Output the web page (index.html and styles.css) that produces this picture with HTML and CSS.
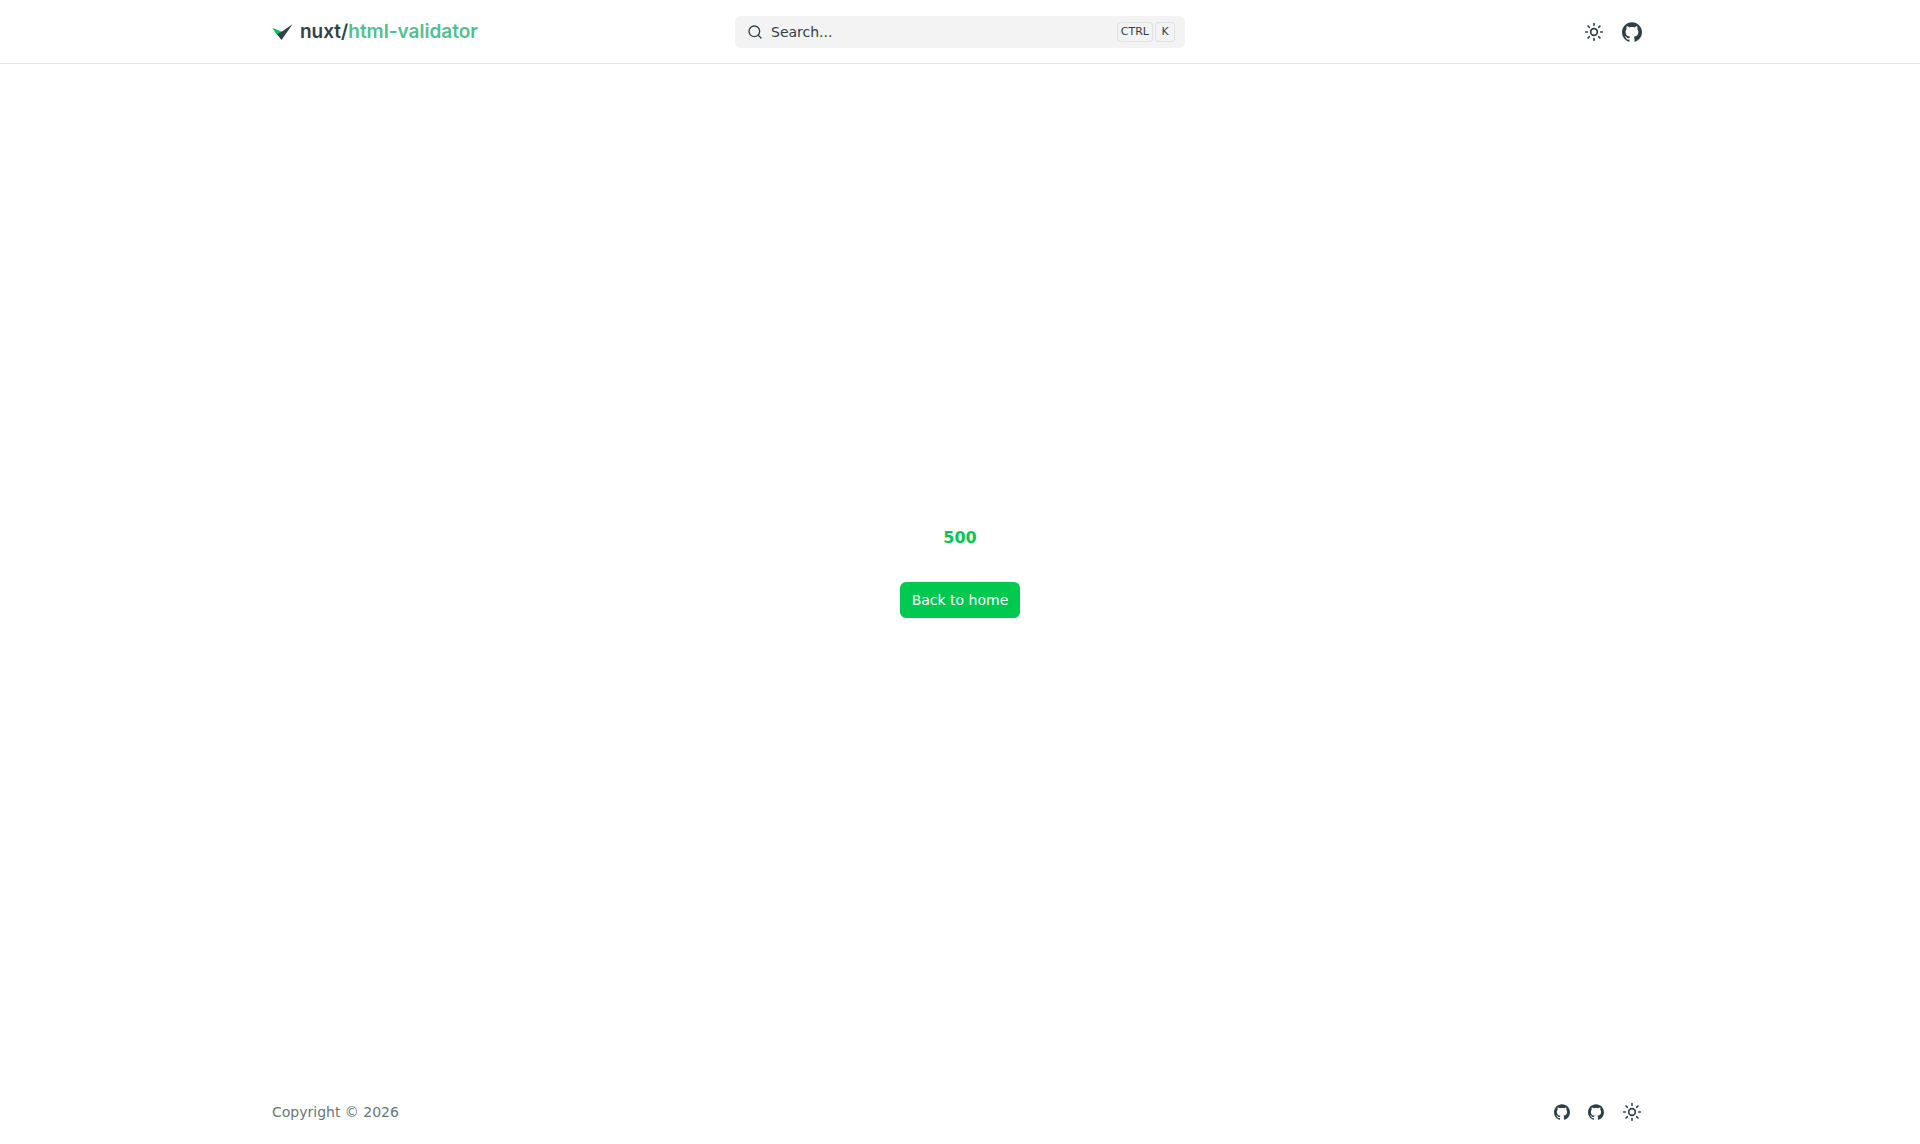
FILE: index.html
```
<!DOCTYPE html>
<html lang="en">
<head>
  <meta charset="UTF-8" />
  <meta name="viewport" content="width=device-width, initial-scale=1.0"/>
  <title>500 - nuxt/html-validator</title>
  <link rel="stylesheet" href="styles.css">
</head>
<body>
  <!-- shared icons -->
  <svg class="sprite" aria-hidden="true">
    <symbol id="icon-sun" viewBox="0 0 24 24">
      <g fill="none" stroke="currentColor" stroke-width="2" stroke-linecap="round" stroke-linejoin="round">
        <circle cx="12" cy="12" r="4"/>
        <path d="M12 2v2m0 16v2M4.93 4.93l1.41 1.41m11.32 11.32l1.41 1.41M2 12h2m16 0h2M6.34 17.66l-1.41 1.41M19.07 4.93l-1.41 1.41"/>
      </g>
    </symbol>
    <symbol id="icon-github" viewBox="0 0 24 24">
      <path fill="currentColor" d="M12 .297c-6.63 0-12 5.373-12 12c0 5.303 3.438 9.8 8.205 11.385c.6.113.82-.258.82-.577c0-.285-.01-1.04-.015-2.04c-3.338.724-4.042-1.61-4.042-1.61C4.422 18.07 3.633 17.7 3.633 17.7c-1.087-.744.084-.729.084-.729c1.205.084 1.838 1.236 1.838 1.236c1.07 1.835 2.809 1.305 3.495.998c.108-.776.417-1.305.76-1.605c-2.665-.3-5.466-1.332-5.466-5.93c0-1.31.465-2.38 1.235-3.22c-.135-.303-.54-1.523.105-3.176c0 0 1.005-.322 3.3 1.23c.96-.267 1.98-.399 3-.405c1.02.006 2.04.138 3 .405c2.28-1.552 3.285-1.23 3.285-1.23c.645 1.653.24 2.873.12 3.176c.765.84 1.23 1.91 1.23 3.22c0 4.61-2.805 5.625-5.475 5.92c.42.36.81 1.096.81 2.22c0 1.606-.015 2.896-.015 3.286c0 .315.21.69.825.57C20.565 22.092 24 17.592 24 12.297c0-6.627-5.373-12-12-12"/>
    </symbol>
  </svg>

  <header class="header">
    <div class="container header-inner">
      <a class="logo" href="#">
        <svg class="logo-mark" viewBox="0 0 20 16" aria-hidden="true">
          <path fill="#00c950" d="M.3 3.8L10 7.8v4L4.6 10.5z"/>
          <path fill="#2f4148" d="M20.5.2L9.5 16 5 10.2l5-2.7z"/>
        </svg>
        <span>nuxt/<span class="logo-name">html-validator</span></span>
      </a>
      <button class="search" type="button">
        <svg class="search-icon" viewBox="0 0 24 24" aria-hidden="true">
          <g fill="none" stroke="currentColor" stroke-width="2" stroke-linecap="round" stroke-linejoin="round">
            <circle cx="11" cy="11" r="8"/>
            <path d="m21 21l-4.3-4.3"/>
          </g>
        </svg>
        <span>Search...</span>
        <span class="keys"><kbd>CTRL</kbd><kbd>K</kbd></span>
      </button>
      <div class="actions">
        <button class="icon-button" type="button" aria-label="Toggle color mode"><svg class="icon"><use href="#icon-sun"/></svg></button>
        <a class="icon-button" href="#" aria-label="GitHub"><svg class="icon"><use href="#icon-github"/></svg></a>
      </div>
    </div>
  </header>

  <main class="error">
    <h1 class="error-code">500</h1>
    <a class="home-button" href="#">Back to home</a>
  </main>

  <footer class="container footer">
    <p class="copyright">Copyright © 2026</p>
    <div class="actions">
      <a class="icon-button small" href="#" aria-label="Nuxt on GitHub"><svg class="icon"><use href="#icon-github"/></svg></a>
      <a class="icon-button small" href="#" aria-label="GitHub"><svg class="icon"><use href="#icon-github"/></svg></a>
      <button class="icon-button" type="button" aria-label="Toggle color mode"><svg class="icon"><use href="#icon-sun"/></svg></button>
    </div>
  </footer>
</body>
</html>
```
FILE: styles.css
```
* {
  box-sizing: border-box;
}
body {
  margin: 0;
  min-height: 100vh;
  display: flex;
  flex-direction: column;
  font-family: "DejaVu Sans", sans-serif;
  font-size: 14px;
  line-height: 20px;
  color: #2f4148;
  background: #fff;
}
a {
  color: inherit;
  text-decoration: none;
}
button {
  font: inherit;
  color: inherit;
  border: none;
  background: none;
  cursor: pointer;
}
.sprite {
  display: none;
}
.container {
  width: 100%;
  max-width: 1440px;
  margin: 0 auto;
  padding: 0 32px;
}
.header {
  height: 64px;
  border-bottom: 1px solid #e1e3e4;
}
.header-inner {
  height: 64px;
  display: grid;
  grid-template-columns: 1fr 450px 1fr;
  align-items: center;
}
.logo {
  display: flex;
  align-items: center;
  gap: 8px;
  font-family: Inter, sans-serif;
  font-size: 19px;
  font-weight: 600;
  font-optical-sizing: none;
}
.logo-mark {
  width: 20px;
  height: 16px;
  overflow: visible;
}
.logo-name {
  color: #51c08e;
}
.search {
  display: flex;
  align-items: center;
  gap: 8px;
  height: 32px;
  padding: 0 10px 0 12px;
  border-radius: 6px;
  background: #f3f3f3;
}
.search-icon {
  width: 16px;
  height: 16px;
}
.keys {
  display: flex;
  gap: 2px;
  margin-left: auto;
}
kbd {
  min-width: 20px;
  height: 20px;
  padding: 0 4px;
  border-radius: 4px;
  box-shadow: inset 0 0 0 1px #dde2e2;
  font-family: inherit;
  font-size: 11px;
  text-align: center;
}
.actions {
  display: flex;
  align-items: center;
  justify-content: flex-end;
  gap: 6px;
}
.icon-button {
  display: flex;
  padding: 6px;
}
.icon {
  width: 20px;
  height: 20px;
}
.small .icon {
  width: 16px;
  height: 16px;
}
.error {
  flex: 1;
  display: flex;
  flex-direction: column;
  align-items: center;
  justify-content: center;
  gap: 32px;
}
.error-code {
  margin: 0;
  font-size: 16px;
  line-height: 24px;
  color: #00c950;
}
.home-button {
  padding: 8px 12px;
  border-radius: 6px;
  color: #fff;
  background: #00c950;
}
.footer {
  display: flex;
  align-items: center;
  justify-content: space-between;
  height: 64px;
}
.copyright {
  margin: 0;
  color: #65777a;
}
```
